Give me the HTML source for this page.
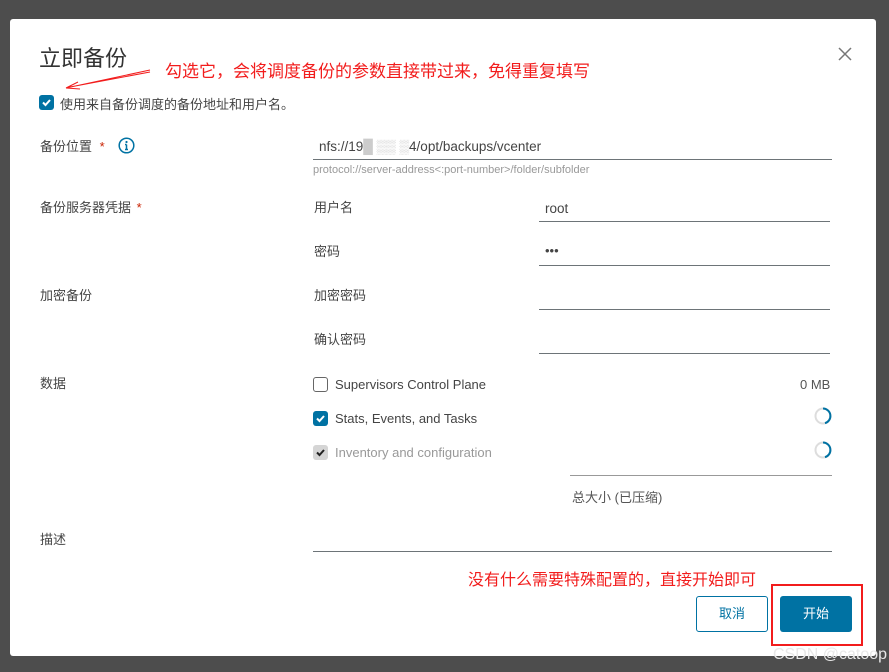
<!DOCTYPE html>
<html><head><meta charset="utf-8"><style>
*{margin:0;padding:0;box-sizing:border-box}
body{width:889px;height:672px;background:#4d4d4d;position:relative;overflow:hidden;font-family:"Liberation Sans","Noto Sans CJK SC",sans-serif;color:#444;font-size:13px}
#dlg{position:absolute;left:10px;top:19px;width:866px;height:637px;background:#fff;border-radius:3px}
.a{position:absolute;white-space:nowrap}
.ln{position:absolute;height:1px;background:#6d7478}
.cb{position:absolute;width:15px;height:15px;border-radius:3px}
.red{color:#f21c1c;font-size:16px}
</style></head><body>
<div id="dlg"></div>
<div class="a" style="left:39px;top:41px;font-size:22px;color:#333">立即备份</div>
<svg class="a" style="left:838px;top:47px" width="14" height="14"><path d="M1 1L13 13M13 1L1 13" stroke="#777" stroke-width="1.5"/></svg>
<div class="a red" style="left:165px;top:57px;font-size:17px">勾选它，会将调度备份的参数直接带过来，免得重复填写</div>
<svg class="a" style="left:60px;top:66px" width="95" height="26"><path d="M90 4 L6 22 M6 22 L18 16 M6 22 L20 23 M90 6 L10 21" stroke="#f21c1c" stroke-width="1" fill="none"/></svg>
<div class="cb" style="left:39px;top:95px;background:#0072a3"></div>
<svg class="a" style="left:39px;top:95px" width="15" height="15"><path d="M4 7.5 L6.5 10 L11 5" stroke="#fff" stroke-width="2" fill="none"/></svg>
<div class="a" style="left:60px;top:94px">使用来自备份调度的备份地址和用户名。</div>
<div class="a" style="left:40px;top:136px">备份位置 <span style="color:#c92100;margin-left:4px">*</span></div>
<svg class="a" style="left:118px;top:137px" width="17" height="17"><circle cx="8.5" cy="8.5" r="7.3" stroke="#0072a3" stroke-width="1.5" fill="none"/><circle cx="8.5" cy="5" r="1.1" fill="#0072a3"/><path d="M8.5 7.5v5M7 12.5h3M7 7.5h1.5" stroke="#0072a3" stroke-width="1.5"/></svg>
<div class="a" style="left:319px;top:139px;font-size:13.5px">nfs://19<span style="color:#ccc">█ ▒▒ ▒</span>4/opt/backups/vcenter</div>
<div class="ln" style="left:313px;top:159px;width:519px"></div>
<div class="a" style="left:313px;top:164px;font-size:11px;color:#999">protocol://server-address&lt;:port-number&gt;/folder/subfolder</div>
<div class="a" style="left:40px;top:197px">备份服务器凭据 <span style="color:#c92100;margin-left:2px">*</span></div>
<div class="a" style="left:314px;top:197px">用户名</div>
<div class="a" style="left:545px;top:201px;font-size:13.5px">root</div>
<div class="ln" style="left:539px;top:221px;width:291px"></div>
<div class="a" style="left:314px;top:241px">密码</div>
<div class="a" style="left:545px;top:243px;font-size:13px">•••</div>
<div class="ln" style="left:539px;top:265px;width:291px"></div>
<div class="a" style="left:40px;top:285px">加密备份</div>
<div class="a" style="left:314px;top:285px">加密密码</div>
<div class="ln" style="left:539px;top:309px;width:291px"></div>
<div class="a" style="left:314px;top:329px">确认密码</div>
<div class="ln" style="left:539px;top:353px;width:291px"></div>
<div class="a" style="left:40px;top:373px">数据</div>
<div class="cb" style="left:313px;top:377px;border:1px solid #666;background:#fff"></div>
<div class="a" style="left:335px;top:377px;color:#444">Supervisors Control Plane</div>
<div class="a" style="left:800px;top:377px;color:#555">0 MB</div>
<div class="cb" style="left:313px;top:411px;background:#0072a3"></div>
<svg class="a" style="left:313px;top:411px" width="15" height="15"><path d="M4 7.5 L6.5 10 L11 5" stroke="#fff" stroke-width="2" fill="none"/></svg>
<div class="a" style="left:335px;top:411px;color:#444">Stats, Events, and Tasks</div>
<div class="cb" style="left:313px;top:445px;background:#d5d5d5"></div>
<svg class="a" style="left:313px;top:445px" width="15" height="15"><path d="M4 7.5 L6.5 10 L11 5" stroke="#222" stroke-width="2" fill="none"/></svg>
<div class="a" style="left:335px;top:445px;color:#999">Inventory and configuration</div>
<svg class="a" style="left:813px;top:406px" width="20" height="20"><circle cx="10" cy="10" r="7.5" stroke="#ddd" stroke-width="2" fill="none"/><path d="M10 2.5 A7.5 7.5 0 0 1 12 17.2" stroke="#0072a3" stroke-width="2" fill="none"/></svg>
<svg class="a" style="left:813px;top:440px" width="20" height="20"><circle cx="10" cy="10" r="7.5" stroke="#ddd" stroke-width="2" fill="none"/><path d="M10 2.5 A7.5 7.5 0 0 1 12 17.2" stroke="#0072a3" stroke-width="2" fill="none"/></svg>
<div class="ln" style="left:570px;top:475px;width:262px;background:#999"></div>
<div class="a" style="left:572px;top:487px;color:#555">总大小 (已压缩)</div>
<div class="a" style="left:40px;top:529px">描述</div>
<div class="ln" style="left:313px;top:551px;width:519px"></div>
<div class="a red" style="left:468px;top:566px">没有什么需要特殊配置的，直接开始即可</div>
<div class="a" style="left:696px;top:596px;width:72px;height:36px;border:1px solid #0072a3;border-radius:3px;color:#0072a3;text-align:center;line-height:34px">取消</div>
<div class="a" style="left:780px;top:596px;width:72px;height:36px;background:#0072a3;border-radius:3px;color:#fff;text-align:center;line-height:36px">开始</div>
<div class="a" style="left:771px;top:584px;width:92px;height:62px;border:2px solid #f21c1c"></div>
<div class="a" style="left:773px;top:646px;color:#e8e8e8;font-size:16px">CSDN @catoop</div>
</body></html>
